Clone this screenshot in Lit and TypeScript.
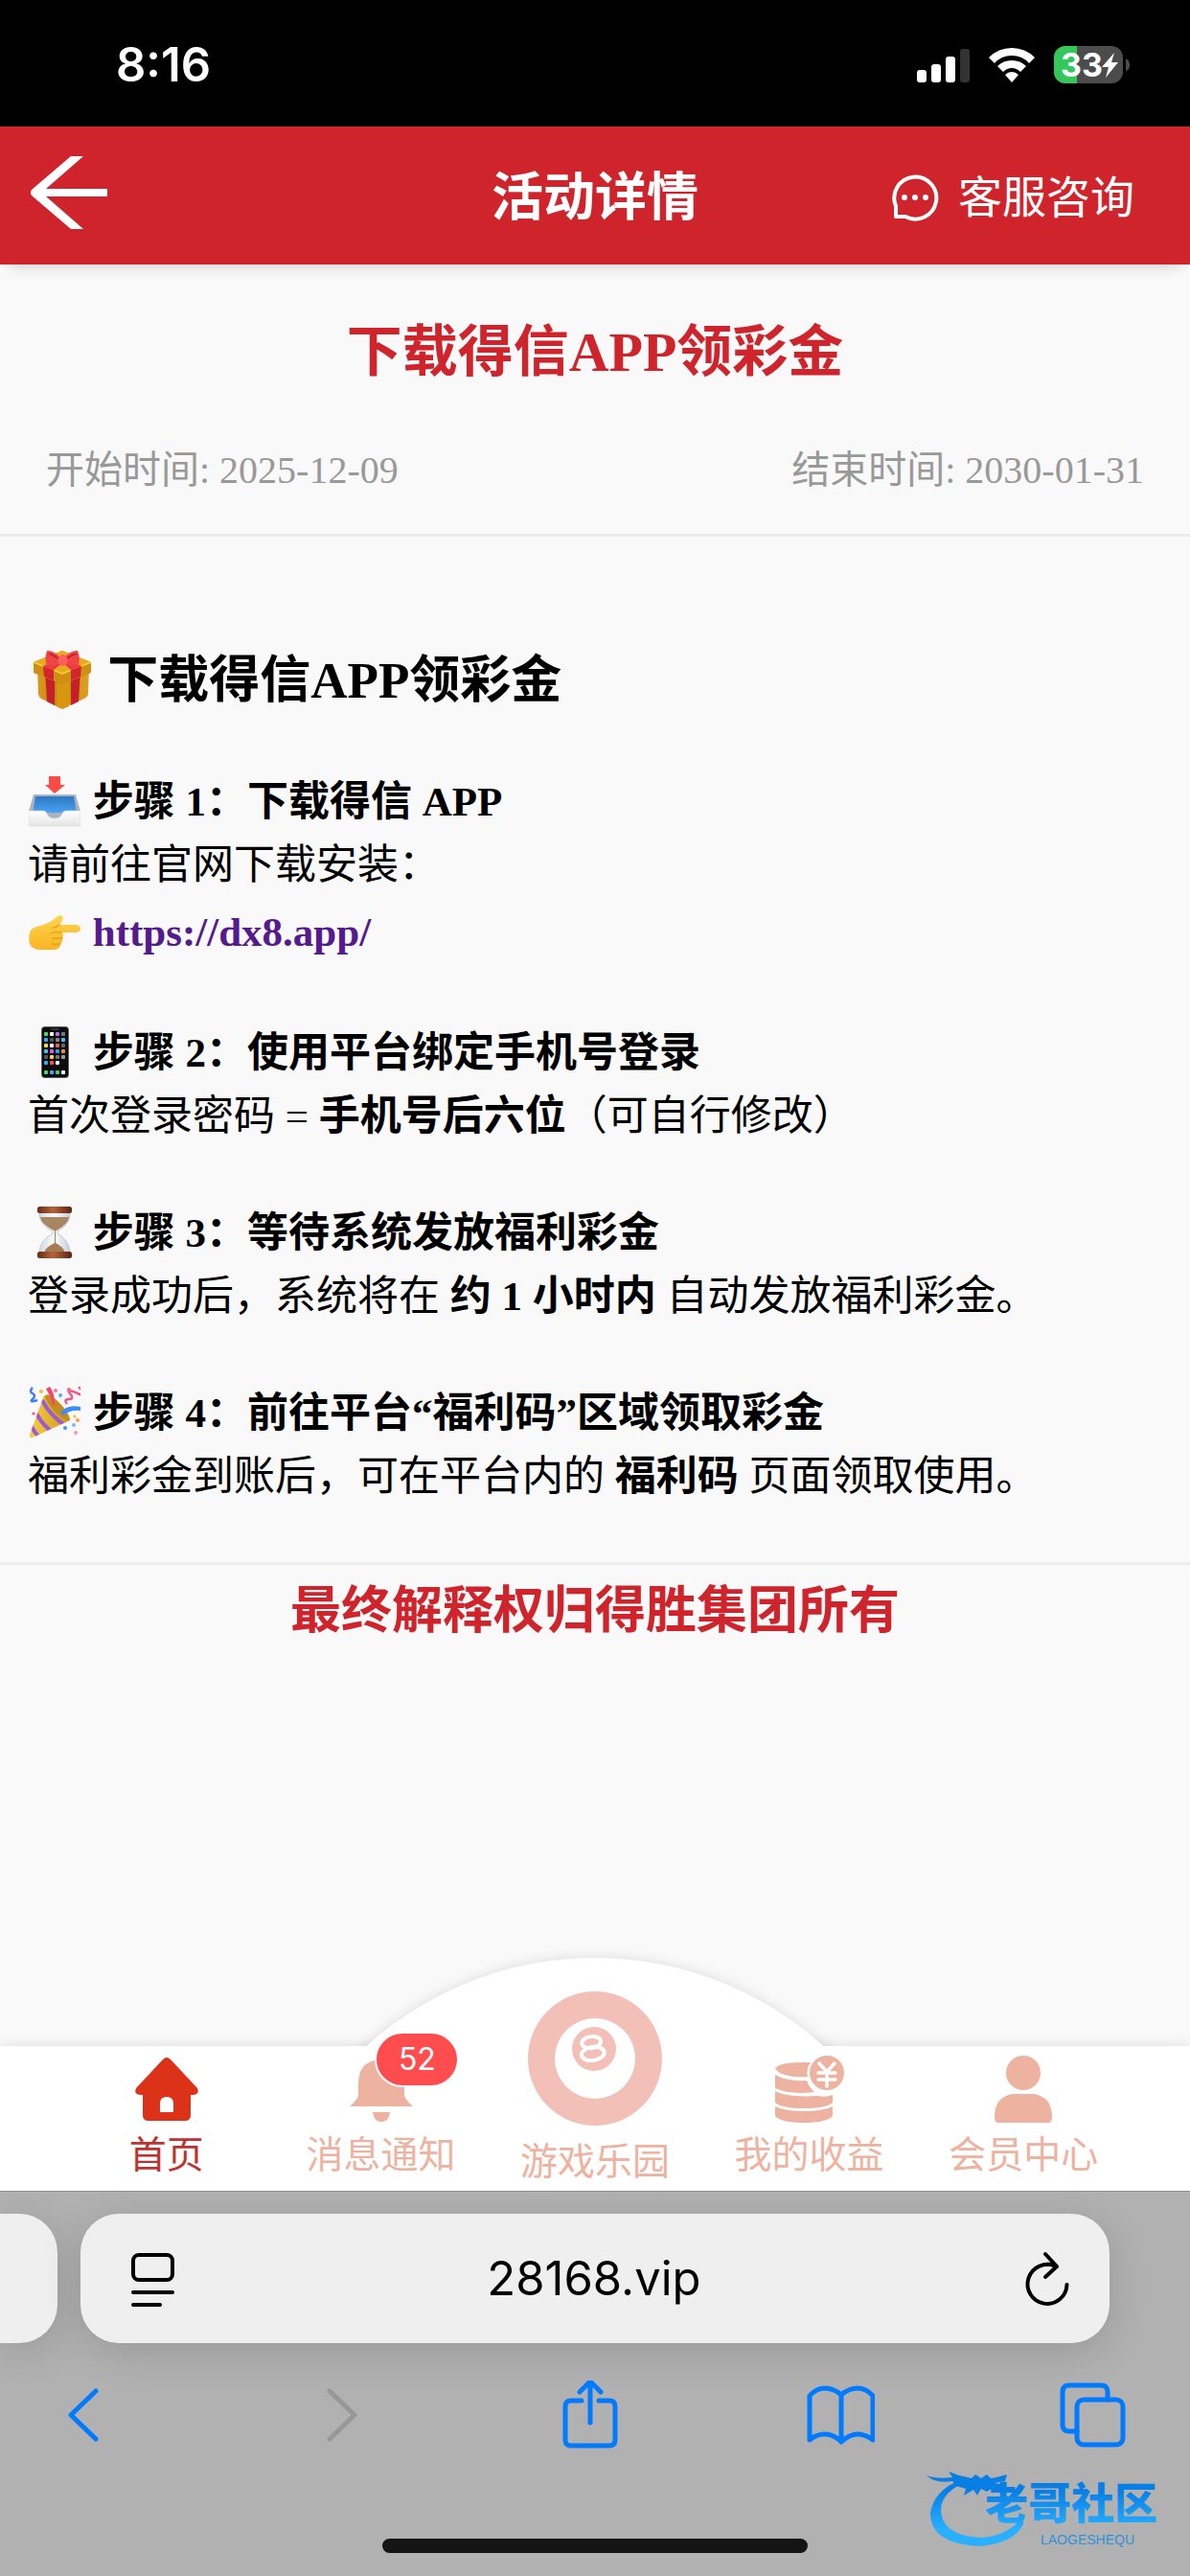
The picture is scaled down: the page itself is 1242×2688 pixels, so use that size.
import { LitElement, html, svg, css, nothing } from "lit";
import { customElement, property } from "lit/decorators.js";
import { classMap } from "lit/directives/class-map.js";

const gift = html`<svg class="emoji emoji-lg" viewBox="0 0 66 62" role="img" aria-label="礼物">
  <defs>
    <linearGradient id="g-l" x1="0" x2="1"><stop offset="0" stop-color="#d99a1c"/><stop offset="1" stop-color="#c17f0c"/></linearGradient>
    <linearGradient id="g-r" x1="0" x2="1"><stop offset="0" stop-color="#c98a12"/><stop offset="1" stop-color="#dba224"/></linearGradient>
  </defs>
  <path d="M8 18 32 30V61L12 51Q9 49 9 46Z" fill="url(#g-l)"/>
  <path d="M62 18 35 30V61L57 51Q61 49 61 46Z" fill="url(#g-r)"/>
  <path d="M28 28H41V59L34 62 28 59Z" fill="#d9960f"/>
  <path d="M16 22 26 28V58L18 54Z" fill="#c5202a"/>
  <path d="M53 22 43 28V58L51 54Z" fill="#c5202a"/>
  <path d="M4 13 34 1 64 13V24L34 36 4 24Z" fill="#cf8f12"/>
  <path d="M4 13 34 25 64 13 34 1Z" fill="#e9ab1b"/>
  <path d="M4 13 34 25 64 13" fill="none" stroke="#ffd23c" stroke-width="1.5"/>
  <path d="M14 17 25 21V32L15 28ZM54 17 43 21V32L53 28Z" fill="#d4242f"/>
  <path d="M14 17 28 11 34 14 25 21ZM54 17 41 11 35 14 43 21Z" fill="#ea3a3f"/>
  <path d="M34 10Q25 0 18 1 15 9 18 17 26 18 34 13 43 18 51 16 53 8 50 1 43 0 34 10Z" fill="#ef4547"/>
  <path d="M20 4Q27 6 33 12M49 4Q41 6 36 12" fill="none" stroke="#bd1f28" stroke-width="1.6"/>
  <ellipse cx="34.500" cy="11" rx="5" ry="6" fill="#ff5f5c"/>
</svg>`;

const inbox = html`<svg class="emoji" viewBox="0 0 54 54" role="img" aria-label="收件箱">
  <defs>
    <linearGradient id="i-b" x1="0" y1="0" x2="0" y2="1"><stop offset="0" stop-color="#2b78c2"/><stop offset="1" stop-color="#4ba3f2"/></linearGradient>
    <linearGradient id="i-w" x1="0" y1="0" x2="0" y2="1"><stop offset="0" stop-color="#ffffff"/><stop offset="1" stop-color="#e4e4e4"/></linearGradient>
  </defs>
  <path d="M5 20H49L54 38V51Q54 53 52 53H2Q0 53 0 51V38Z" fill="#aab4be"/>
  <path d="M7 22H47L50 39H4Z" fill="url(#i-b)"/>
  <path d="M0 37H15Q18 37 19 40 21 45 27 45T35 40Q36 37 39 37H54V51Q54 53 52 53H2Q0 53 0 51Z" fill="url(#i-w)" stroke="#d5d5d5" stroke-width=".6"/>
  <path d="M21 1H33V10H38L27 19 17 10H21Z" fill="#fb4b43"/>
</svg>`;

const hand = html`<svg class="emoji" viewBox="0 0 54 54" role="img" aria-label="指向右">
  <defs><linearGradient id="h-y" x1="0" y1="0" x2="0" y2="1"><stop offset="0" stop-color="#ffd54b"/><stop offset="1" stop-color="#f9b423"/></linearGradient></defs>
  <path d="M35 11Q37 14 32 20H50Q54 21 54 24T50 28H35Q37 30 35 34 36 38 33 40 33 46 25 46H13Q4 46 1 40-1 33 2 26 5 22 12 21 23 18 29 12 32 9 35 11Z" fill="url(#h-y)"/>
  <path d="M34 28Q26 27 23 29M35 34Q29 34 25 34M33 40Q28 41 24 40M32 20Q29 23 25 23" fill="none" stroke="#e5a01c" stroke-width="1.300" stroke-linecap="round"/>
</svg>`;

const appColors = [
  "#4cd964", "#fff", "#c46bff", "#777", "#2fa8ff", "#555", "#888", "#39c2ff",
  "#ffd53d", "#fff", "#ff5b4d", "#666", "#32c8ff", "#f04cf0", "#2e9cff", "#ff8c1a",
  "#555", "#ffd53d", "#777", "#999", "#2fa8ff", "#ff4f4f", "#fff", "#111",
];
const phone = html`<svg class="emoji" viewBox="0 0 54 54" role="img" aria-label="手机">
  <rect x="13" y="0" width="29" height="54" rx="4" fill="#5f6266"/>
  <rect x="14" y="1" width="27" height="52" rx="3" fill="#0c0c0e"/>
  <rect x="23" y="2" width="9" height="2" rx="1" fill="#333"/>
  ${appColors.map((c, i) => svg`<rect x=${16 + (i % 4) * 6} y=${6 + Math.floor(i / 4) * 6} width="4" height="4" rx="1" fill=${c} />`)}
  ${["#4cd964", "#39a9ff", "#35d07a", "#fff"].map((c, i) => svg`<rect x=${16 + i * 6} y="46" width="4" height="4" rx="1" fill=${c} />`)}
</svg>`;

const hourglass = html`<svg class="emoji" viewBox="0 0 54 54" role="img" aria-label="沙漏">
  <defs>
    <linearGradient id="w-b" x1="0" x2="1"><stop offset="0" stop-color="#6b2b14"/><stop offset=".45" stop-color="#b4633a"/><stop offset="1" stop-color="#5c2410"/></linearGradient>
    <linearGradient id="w-g" x1="0" x2="1"><stop offset="0" stop-color="#cfd8e2"/><stop offset=".5" stop-color="#fdfdff"/><stop offset="1" stop-color="#c2cddb"/></linearGradient>
  </defs>
  <path d="M11 6H43Q44 18 30 26V28Q44 37 43 49H11Q10 37 25 28V26Q10 18 11 6Z" fill="url(#w-g)" stroke="#b9c1cc" stroke-width=".8"/>
  <path d="M12 11H42Q41 18 29 25H26Q13 18 12 11Z" fill="#a98561"/>
  <path d="M27 25H28V38Q36 42 38 48H16Q18 42 27 38Z" fill="#a67c52"/>
  <rect x="9" y="0" width="36" height="7" rx="2.500" fill="url(#w-b)"/>
  <rect x="9" y="47" width="36" height="7" rx="2.500" fill="url(#w-b)"/>
</svg>`;

const popper = html`<svg class="emoji" viewBox="0 0 54 54" role="img" aria-label="庆祝">
  <defs>
    <linearGradient id="p-g" x1="0" x2="1"><stop offset="0" stop-color="#f9cf45"/><stop offset="1" stop-color="#cf9418"/></linearGradient>
    <clipPath id="p-c"><path d="M16 9Q22 10 32 19 43 31 43 35L4 53Q0 54 1 50Z"/></clipPath>
  </defs>
  <path d="M16 9Q22 10 32 19 43 31 43 35L4 53Q0 54 1 50Z" fill="url(#p-g)"/>
  <g clip-path="url(#p-c)" fill="none" stroke="#9b5bd6" stroke-width="4">
    <path d="M14 14Q22 30 40 42M8 28Q14 40 28 50M2 40Q6 48 12 54"/>
  </g>
  <ellipse cx="30" cy="22" rx="5" ry="18" transform="rotate(-43 30 22)" fill="#c58e1c"/>
  <path d="M25 19Q23 10 18 2L22 0Q28 8 27 20Z" fill="#f0476c"/>
  <path d="M33 27Q40 18 54 21V25Q43 24 36 30Z" fill="#3f8cf2"/>
  <path d="M40 18Q36 13 42 13T43 7 51 7 52 0" fill="none" stroke="#f0588a" stroke-width="2.500"/>
  <path d="M4 1Q0 5 4 7T4 13 9 14" fill="none" stroke="#3f7ff0" stroke-width="2.500"/>
  <g><circle cx="13" cy="5" r="2" fill="#ffb731"/><circle cx="28" cy="4" r="2" fill="#ff77a8"/><circle cx="33" cy="9" r="2" fill="#5aa8ff"/><circle cx="42" cy="3" r="2" fill="#ff6286"/><circle cx="38" cy="43" r="2" fill="#4c8dff"/><circle cx="47" cy="40" r="2" fill="#7fb6ff"/><circle cx="51" cy="35" r="2" fill="#ff9a4d"/><circle cx="49" cy="48" r="2" fill="#ff8fb5"/><circle cx="5" cy="28" r="1.600" fill="#ff4f6d"/><circle cx="48" cy="31" r="1.800" fill="#ffc23b"/></g>
</svg>`;

const navIcons = {
  home: html`<svg class="icon" viewBox="0 0 70 70" aria-hidden="true">
    <path fill="#dc3218" fill-rule="evenodd" d="M31 4Q35 0 39 4L67 34Q70 41 62 41H60V62Q60 68 54 68H16Q10 68 10 62V41H8Q0 41 3 34ZM28 59H42V50Q42 43 35 43T28 50Z"/>
  </svg>`,
  bell: html`<svg class="icon" viewBox="0 0 70 70" aria-hidden="true">
    <path fill="#edb3a0" d="M36 4Q60 5 60 29V42Q62 47 69 53H3Q10 47 12 42V29Q12 5 36 4ZM27 59H45Q44 69 36 69T27 59Z"/>
  </svg>`,
  ball: html`<svg class="ball" viewBox="0 0 140 140" aria-hidden="true">
    <circle cx="70" cy="70" r="70" fill="#f3c0b8"/>
    <circle cx="70" cy="70" r="42" fill="#fff"/>
    <circle cx="69" cy="60" r="23" fill="#f3c0b8"/>
    <g fill="none" stroke="#fff" stroke-width="4" transform="rotate(-8 67 59)"><ellipse cx="67" cy="53" rx="10" ry="6"/><ellipse cx="67" cy="65" rx="12" ry="7"/></g>
  </svg>`,
  coins: html`<svg class="icon wide" viewBox="0 0 74 70" aria-hidden="true">
    <path fill="#edb3a0" d="M1 14Q3 7 31 7H38Q33 14 35 22 10 24 1 14ZM1 20Q13 27 34 26 37 34 42 38 16 41 1 34ZM1 37Q13 44 46 42 54 44 61 41V49Q54 55 31 55T1 49ZM1 53Q11 58 31 58T61 53V63Q55 70 31 70T1 63Z"/>
    <circle cx="55" cy="18" r="18" fill="#edb3a0"/>
    <path d="M47 8 55 17 63 8M46 18H64M46 25H64M55 17V32" fill="none" stroke="#fff" stroke-width="3.500" stroke-linecap="round"/>
  </svg>`,
  person: html`<svg class="icon" viewBox="0 0 70 70" aria-hidden="true">
    <circle cx="35" cy="18" r="18" fill="#edb3a0"/>
    <path fill="#edb3a0" d="M24 40H46Q65 43 65 64 65 70 61 70H9Q5 70 5 64 5 43 24 40Z"/>
  </svg>`,
};

type NavKey = keyof typeof navIcons;

@customElement("status-bar")
class StatusBar extends LitElement {
  static styles = css`
    :host { display: block; background: #000; color: #fff; font-family: Inter, "Liberation Sans", sans-serif; }
    .bar { display: flex; justify-content: space-between; align-items: center; height: 132px; padding: 3px 62px 0 121px; box-sizing: border-box; }
    .time { font-size: 49px; font-weight: 600; line-height: 56px; }
    .signals { display: flex; align-items: center; gap: 20px; }
    .signal, .wifi, .battery-art { display: block; }
    .battery { position: relative; display: block; }
    .level { position: absolute; left: 7px; top: 0; font-size: 34px; font-weight: 700; line-height: 40px; }
  `;
  render() {
    return html`<div class="bar">
      <time class="time">8:16</time>
      <div class="signals">
        <svg class="signal" width="55" height="36" viewBox="0 0 55 36" aria-hidden="true" fill="#fff">
          <rect x="0" y="23" width="10" height="13" rx="3"/><rect x="15" y="17" width="10" height="19" rx="3"/>
          <rect x="30" y="9" width="10" height="27" rx="3"/><rect x="45" y="1" width="10" height="35" rx="3" fill="#333"/>
        </svg>
        <svg class="wifi" width="48" height="36" viewBox="0 0 48 36" aria-hidden="true" fill="#fff">
          <path d="M0 10Q10 0 24 0T48 10L42 16Q35 8 24 8T6 16Z"/>
          <path d="M9 19Q15 13 24 13T39 19L33 25Q29 21 24 21T15 25Z"/>
          <path d="M17 28Q20 25 24 25T31 28L24 36Z"/>
        </svg>
        <span class="battery">
          <svg class="battery-art" width="80" height="40" viewBox="0 0 80 40" aria-hidden="true">
            <defs><clipPath id="bat"><rect x="0" y="0" width="72" height="39" rx="12"/></clipPath></defs>
            <g clip-path="url(#bat)"><rect width="72" height="39" fill="#4c4c4c"/><rect width="24" height="39" fill="#34c759"/></g>
            <path d="M75 13Q79 15 79 20T75 26Z" fill="#4c4c4c"/>
            <path d="M63 7 50 22H57L54 33 67 17H60Z" fill="#fff"/>
          </svg>
          <span class="level">33</span>
        </span>
      </div>
    </div>`;
  }
}

@customElement("page-header")
class PageHeader extends LitElement {
  static styles = css`
    :host { display: block; position: relative; background: #d0242d; color: #fff; box-shadow: 0 12px 14px -10px rgba(0, 0, 0, 0.16); font-family: "Liberation Sans", "Noto Sans CJK SC", sans-serif; }
    .bar { display: grid; grid-template-columns: 1fr auto 1fr; align-items: center; height: 144px; padding: 3px 32px 0; box-sizing: border-box; }
    .back { justify-self: start; padding: 0 0 10px; border: 0; background: none; }
    .back-art { display: block; }
    .title { margin: 0; font-size: 54px; font-weight: 700; line-height: 72px; }
    .service { justify-self: end; display: flex; align-items: center; gap: 20px; padding-right: 26px; color: inherit; text-decoration: none; font-size: 46px; line-height: 64px; }
  `;
  render() {
    return html`<header class="bar">
      <button class="back" aria-label="返回">
        <svg class="back-art" width="80" height="76" viewBox="0 0 80 76" aria-hidden="true">
          <path fill="#fff" d="M42 0H55L16 34H80V42H16L55 76H42L1 41Q-1 38 1 35Z"/>
        </svg>
      </button>
      <h1 class="title">活动详情</h1>
      <a class="service" href="#service">
        <svg width="50" height="50" viewBox="0 0 50 50" aria-hidden="true">
          <path d="M5 45V34A22 22 0 1 1 15 45Z" fill="none" stroke="#fff" stroke-width="4" stroke-linejoin="round"/>
          <g fill="#fff"><circle cx="14" cy="25" r="3"/><circle cx="25" cy="25" r="3"/><circle cx="36" cy="25" r="3"/></g>
        </svg>
        客服咨询
      </a>
    </header>`;
  }
}

@customElement("activity-detail")
class ActivityDetail extends LitElement {
  static styles = css`
    :host { display: block; color: #000; font-family: "Liberation Serif", "Noto Sans CJK SC", serif; }
    .intro { padding: 56px 48px 38px; border-bottom: 3px solid #ebebeb; }
    .title { margin: 0; color: #d0242d; font-size: 58px; font-weight: 700; line-height: 72px; text-align: center; }
    .dates { display: flex; justify-content: space-between; margin-top: 59px; color: #999; font-size: 40px; line-height: 56px; }
    .body { padding: 114px 29px 56px; border-bottom: 3px solid #ebebeb; font-size: 43px; line-height: 66px; }
    .heading { margin: 0 0 58px; font-size: 53px; font-weight: 700; line-height: 72px; }
    .steps { display: flex; flex-direction: column; gap: 56px; }
    .step, .line { margin: 0; font-size: 43px; }
    .step { font-weight: 700; }
    .line-link { line-height: 74px; font-weight: 700; }
    .link { color: #551a8b; text-decoration: none; }
    .emoji { width: 54px; height: 54px; margin: 0 2px 0 1px; vertical-align: -12px; }
    .emoji-lg { width: 66px; height: 62px; margin: 0 2px; }
    .notice { margin: 0; padding: 12px 29px 0; color: #d0242d; font-size: 53px; font-weight: 700; line-height: 72px; text-align: center; }
  `;
  render() {
    return html`
      <section class="intro">
        <h2 class="title">下载得信APP领彩金</h2>
        <div class="dates"><span>开始时间: 2025-12-09</span><span>结束时间: 2030-01-31</span></div>
      </section>
      <article class="body">
        <h3 class="heading">${gift} 下载得信APP领彩金</h3>
        <div class="steps">
          <section>
            <h4 class="step">${inbox} 步骤 1：下载得信 APP</h4>
            <p class="line">请前往官网下载安装：</p>
            <p class="line line-link">${hand} <a class="link" href="https://dx8.app/">https://dx8.app/</a></p>
          </section>
          <section>
            <h4 class="step">${phone} 步骤 2：使用平台绑定手机号登录</h4>
            <p class="line">首次登录密码 = <strong>手机号后六位</strong>（可自行修改）</p>
          </section>
          <section>
            <h4 class="step">${hourglass} 步骤 3：等待系统发放福利彩金</h4>
            <p class="line">登录成功后，系统将在 <strong>约 1 小时内</strong> 自动发放福利彩金。</p>
          </section>
          <section>
            <h4 class="step">${popper} 步骤 4：前往平台“福利码”区域领取彩金</h4>
            <p class="line">福利彩金到账后，可在平台内的 <strong>福利码</strong> 页面领取使用。</p>
          </section>
        </div>
      </article>
      <p class="notice">最终解释权归得胜集团所有</p>
    `;
  }
}

@customElement("tab-nav")
class TabNav extends LitElement {
  static styles = css`
    :host { display: block; position: relative; font-family: "Liberation Sans", "Noto Sans CJK SC", sans-serif; }
    .hill { position: absolute; left: 0; right: 0; bottom: 100%; height: 112px; overflow: hidden; }
    .disc { width: 710px; height: 710px; margin: 20px auto 0; border-radius: 50%; background: #fff; box-shadow: 0 0 14px rgba(0, 0, 0, 0.12); }
    .shade { box-shadow: 0 0 14px rgba(0, 0, 0, 0.12); }
    .items { position: relative; display: grid; grid-template-columns: repeat(5, 1fr); align-items: end; height: 151px; padding: 0 62px; background: #fff; }
    .item { display: flex; flex-direction: column; align-items: center; gap: 12px; padding-bottom: 15px; color: #edb3a0; font-size: 39px; line-height: 44px; text-decoration: none; }
    .active { color: #c0322f; }
    .center { gap: 16px; padding-bottom: 8px; margin-top: -57px; }
    .art { position: relative; display: block; }
    .icon { display: block; width: 70px; height: 70px; }
    .wide { width: 74px; }
    .ball { display: block; width: 140px; height: 140px; }
    .badge { position: absolute; left: 29px; top: -25px; width: 84px; height: 54px; border: 2px solid #fff; border-radius: 29px; background: #ff4d4f; color: #fff; font-family: Inter, "Liberation Sans", sans-serif; font-size: 32px; line-height: 54px; text-align: center; }
  `;
  private items: { key: NavKey; label: string; active?: boolean; badge?: number }[] = [
    { key: "home", label: "首页", active: true },
    { key: "bell", label: "消息通知", badge: 52 },
    { key: "ball", label: "游戏乐园" },
    { key: "coins", label: "我的收益" },
    { key: "person", label: "会员中心" },
  ];
  render() {
    return html`
      <div class="shade">
        <div class="hill"><div class="disc"></div></div>
        <nav class="items">
          ${this.items.map(
            (it) => html`<a href="#${it.key}" class=${classMap({ item: true, active: !!it.active, center: it.key === "ball" })}>
              <span class="art">${navIcons[it.key]}${it.badge ? html`<span class="badge">${it.badge}</span>` : nothing}</span>
              <span>${it.label}</span>
            </a>`
          )}
        </nav>
      </div>
    `;
  }
}

@customElement("browser-bar")
class BrowserBar extends LitElement {
  @property() address = "28168.vip";
  static styles = css`
    :host { display: block; position: relative; background: #b1b1b1; font-family: Inter, "Liberation Sans", sans-serif; }
    .chrome { display: flex; flex-direction: column; padding: 23px 0 24px; border-top: 1px solid #8f8f8f; overflow: hidden; }
    .row { display: flex; gap: 24px; padding-right: 84px; }
    .side { flex: none; width: 60px; border-radius: 0 40px 40px 0; background: #efefef; box-shadow: 0 8px 44px rgba(0, 0, 0, 0.14); }
    .address { flex: 1; display: flex; align-items: center; height: 135px; padding: 0 42px 0 50px; box-sizing: border-box; border-radius: 40px; background: #efefef; box-shadow: 0 8px 44px rgba(0, 0, 0, 0.14); }
    .field { flex: 1; min-width: 0; padding: 0 10px 0 0; border: 0; background: none; color: #000; font-family: inherit; font-size: 49px; line-height: 64px; text-align: center; }
    .tool { padding: 0; border: 0; background: none; }
    .tool svg { display: block; fill: none; stroke-linecap: round; stroke-linejoin: round; }
    .dark svg { stroke: #000; stroke-width: 4; }
    .tools { display: flex; justify-content: space-between; margin-top: 39px; padding: 0 66px 0 50px; }
    .tools svg { stroke: #007aff; stroke-width: 5; }
    .tools .off svg { stroke: #989898; }
    .home { align-self: center; width: 444px; height: 15px; margin-top: 93px; border-radius: 8px; background: #141414; }
    .mark { position: absolute; right: 14px; bottom: 26px; }
    .mark-name { font-family: "Noto Sans CJK SC", sans-serif; font-size: 45px; font-weight: 900; }
    .mark-sub { font-family: "Liberation Sans", sans-serif; font-size: 14px; }
  `;
  render() {
    return html`<div class="chrome">
      <div class="row">
        <div class="side"></div>
        <div class="address">
          <button class="tool dark" aria-label="页面设置">
            <svg width="48" height="60" viewBox="0 0 48 60"><rect x="5" y="5" width="41" height="26" rx="6"/><path d="M5 44H46M5 57H33"/></svg>
          </button>
          <input class="field" type="text" aria-label="地址" .value=${this.address} />
          <button class="tool dark" aria-label="重新加载">
            <svg width="48" height="60" viewBox="0 0 48 60"><path d="M34 17A20.500 20.500 0 1 0 45.500 36M23 4 35 17 23 28M35 17Q29 14 25 15"/></svg>
          </button>
        </div>
      </div>
      <div class="tools">
        <button class="tool" aria-label="后退"><svg width="72" height="72" viewBox="0 0 72 72"><path d="M50 11 24 36 50 61"/></svg></button>
        <button class="tool off" aria-label="前进" disabled><svg width="72" height="72" viewBox="0 0 72 72"><path d="M30 11 56 36 30 61"/></svg></button>
        <button class="tool" aria-label="分享"><svg width="72" height="72" viewBox="0 0 72 72"><path d="M30 21H19Q13 21 13 27V62Q13 68 19 68H59Q65 68 65 62V27Q65 21 59 21H48M39 44V1M28 12 39 1 50 12"/></svg></button>
        <button class="tool" aria-label="书签"><svg width="72" height="72" viewBox="0 0 72 72"><path d="M37 15Q29 8 20 8T4 16V62Q11 56 20 56T37 64Q46 56 54 56T70 62V16Q63 8 54 8T37 15V64"/></svg></button>
        <button class="tool" aria-label="标签页"><svg width="72" height="72" viewBox="0 0 72 72"><rect x="20" y="20" width="48" height="47" rx="7"/><path d="M20 53H12Q5 53 5 46V12Q5 5 12 5H45Q52 5 52 12V20"/></svg></button>
      </div>
      <div class="home"></div>
      <svg class="mark" width="264" height="90" viewBox="0 0 264 90" role="img">
        <defs><linearGradient id="m" gradientUnits="userSpaceOnUse" x1="0" y1="0" x2="0" y2="90"><stop offset="0" stop-color="#087fe2"/><stop offset=".3" stop-color="#087fe6"/><stop offset=".75" stop-color="#28b0ff"/><stop offset="1" stop-color="#28b0ff"/></linearGradient></defs>
        <g fill="url(#m)">
          <path d="M36 17Q11 27 7 50 6 82 58 85 94 82 104 62L104 54Q88 74 60 76 18 74 18 46 19 28 46 17Z"/>
          <path d="M3 11Q14 15 30 13L26 7 37 11 50 14 54 10 60 14 66 10 70 14 76 13 87 10 85 17 74 19 85 21 83 27 72 24 66 28 60 25 56 32 52 26 42 32 44 25 34 22 30 17Q12 20 3 11Z"/>
          <text class="mark-name" x="154" y="57" text-anchor="middle">老哥社区</text>
        </g>
        <text class="mark-sub" x="171" y="83" text-anchor="middle" fill="#2f93dc">LAOGESHEQU</text>
      </svg>
    </div>`;
  }
}

@customElement("app-root")
class AppRoot extends LitElement {
  static styles = css`
    :host { display: flex; flex-direction: column; min-height: 100vh; background: #f9f9f9; }
    .content { flex: 1; }
  `;
  render() {
    return html`
      <status-bar></status-bar>
      <page-header></page-header>
      <main class="content"><activity-detail></activity-detail></main>
      <tab-nav></tab-nav>
      <browser-bar></browser-bar>
    `;
  }
}
